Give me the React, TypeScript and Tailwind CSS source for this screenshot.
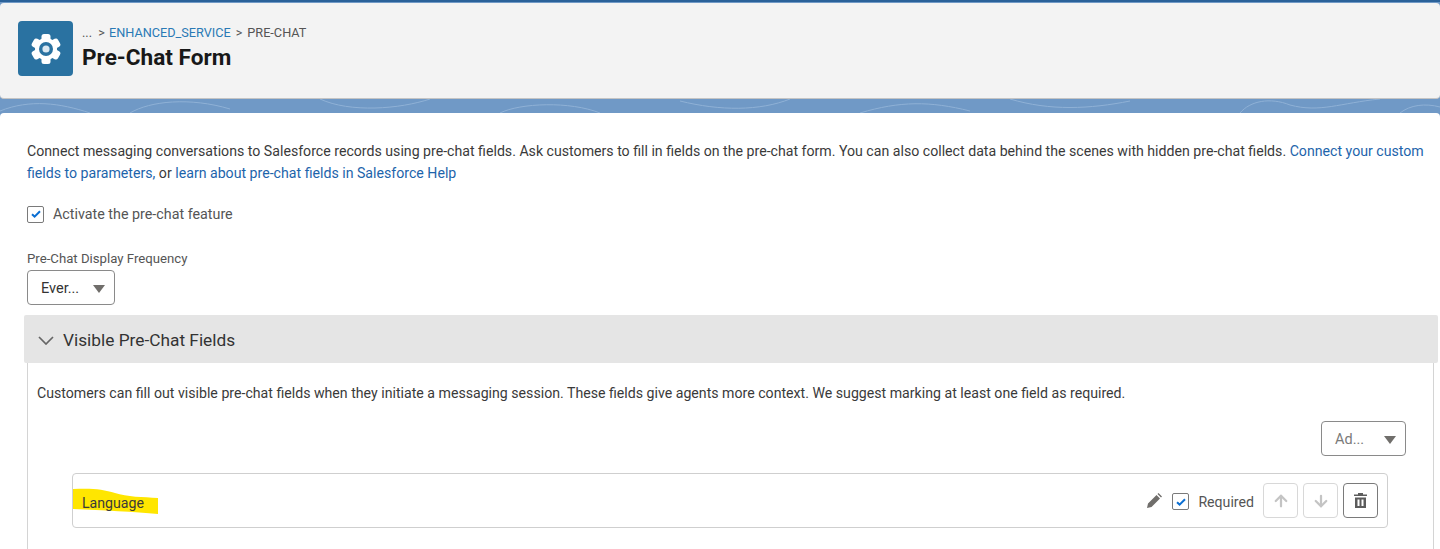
import { ArrowDown, ArrowUp } from "lucide-react";

function Dropdown({ label, muted }: { label: string; muted?: boolean }) {
  return (
    <div
      className={`flex h-[35px] items-center justify-between rounded-[4px] border border-[#8a8a8a] bg-white pl-[13px] pr-[9px] text-[14.5px] ${
        muted ? "w-[85px] text-[#7a7a7a]" : "w-[88px] text-[#333]"
      }`}
    >
      <span className="mt-[2px]">{label}</span>
      <svg className="mt-[2px]" width="12" height="8" viewBox="0 0 12 8">
        <path d="M0 0h12L6 8z" fill="#706e6b" />
      </svg>
    </div>
  );
}

function CheckBox() {
  return (
    <span className="flex h-[17px] w-[17px] items-center justify-center rounded-[2px] border border-[#7a7a7a] bg-white">
      <svg width="10" height="8" viewBox="0 0 10 8">
        <path d="M1 4.2 3.6 6.6 9 1.2" fill="none" stroke="#0b6fd3" strokeWidth="2" />
      </svg>
    </span>
  );
}

function IconButton({ children, disabled }: { children: React.ReactNode; disabled?: boolean }) {
  return (
    <div
      className={`flex h-[35px] w-[35px] items-center justify-center rounded-[4px] border ${
        disabled ? "border-[#d8d8d8] text-[#c4c4c4]" : "border-[#7a7a7a] text-[#5c5c5c]"
      }`}
    >
      {children}
    </div>
  );
}

// solid cog, blue ring, white middle
function Gear() {
  const teeth = [0, 60, 120, 180, 240, 300];
  return (
    <svg width="32" height="32" viewBox="0 0 32 32">
      {teeth.map((a) => (
        <rect key={a} x="11.5" y="1" width="9" height="8" rx="2.5" fill="#fff" transform={`rotate(${a} 16 16)`} />
      ))}
      <circle cx="16" cy="16" r="11" fill="#fff" />
      <circle cx="16" cy="16" r="7" fill="#2a72a1" />
      <circle cx="16" cy="16" r="3.6" fill="#dbe8f1" />
    </svg>
  );
}

function Band() {
  return (
    <svg className="block h-[14px] w-[1440px]" viewBox="0 0 1440 14" fill="none" stroke="#8fb1d6" strokeWidth="1">
      <path d="M0 12C30 0 60 4 90 14M130 14C150 2 190 -2 230 10M320 0C350 14 400 10 430 0M500 14C520 4 570 2 600 14M680 2C720 12 760 12 790 0M860 14C900 2 930 2 970 12M1010 0C1050 12 1090 10 1130 2M1240 14C1250 2 1270 -2 1290 6C1320 14 1340 4 1380 0M1400 14C1410 6 1425 4 1440 8" />
    </svg>
  );
}

export default function App() {
  return (
    <div className="h-[549px] w-[1440px] overflow-hidden bg-[#7099c6] font-['Roboto','Noto_Sans',sans-serif] text-[#3a3a3a]">
      <div className="h-[2px] bg-[#2a6199]" />
      <header className="mt-[1px] flex h-[96px] items-start rounded-[4px] border-b border-[#c4c4c4] bg-[#f3f3f3] pl-[18px] pt-[18px]">
        <div className="flex h-[55px] w-[55px] items-center justify-center rounded-[4px] bg-[#2a72a1]">
          <Gear />
        </div>
        <div className="ml-[9px] pt-[2px]">
          <div className="flex h-[20px] items-center gap-[4px] text-[12.7px] text-[#555]">
            <span className="whitespace-pre">...  &gt;</span>
            <span className="text-[#2a7ab5]">ENHANCED_SERVICE</span>
            <span className="ml-[1px]">&gt;</span>
            <span className="ml-[1px]">PRE-CHAT</span>
          </div>
          <h1 className="text-[22.6px] font-bold leading-[30px] text-[#181818]">Pre-Chat Form</h1>
        </div>
      </header>
      <Band />
      <main className="h-[436px] rounded-t-[4px] bg-white pl-[27px] pr-[2px]">
        <p className="pt-[27px] text-[14.15px] leading-[22px] text-[#3a3a3a]">
          Connect messaging conversations to Salesforce records using pre-chat fields. Ask customers to fill in fields on
          the pre-chat form. You can also collect data behind the scenes with hidden pre-chat fields.{" "}
          <span className="text-[#1d64ab]">Connect your custom fields to parameters,</span> or{" "}
          <span className="text-[#1d64ab]">learn about pre-chat fields in Salesforce Help</span>
        </p>
        <label className="mt-[20px] flex h-[20px] items-center gap-[9px] text-[14.3px] text-[#555]">
          <CheckBox />
          <span className="mt-[1px]">Activate the pre-chat feature</span>
        </label>
        <div className="mt-[26px] text-[13.2px] leading-[18px] text-[#555]">Pre-Chat Display Frequency</div>
        <div className="mt-[2px]">
          <Dropdown label="Ever..." />
        </div>
        <section className="-ml-[3px] mt-[10px]">
          <div className="flex h-[48px] items-center gap-[9px] rounded-[2px] bg-[#e5e5e5] pl-[14px] text-[#333]">
            <svg className="mt-[2px]" width="16" height="9" viewBox="0 0 16 9">
              <path d="M1 1 8 8 15 1" fill="none" stroke="#666" strokeWidth="1.7" />
            </svg>
            <h2 className="mt-[3px] text-[17.3px]">Visible Pre-Chat Fields</h2>
          </div>
          <div className="ml-[3px] mr-[4px] h-[200px] border-x border-[#d4d4d4] pl-[9px] pr-[27px]">
            <p className="pt-[19px] text-[14.15px] leading-[22px] text-[#3a3a3a]">
              Customers can fill out visible pre-chat fields when they initiate a messaging session. These fields give
              agents more context. We suggest marking at least one field as required.
            </p>
            <div className="mt-[17px] flex justify-end">
              <Dropdown label="Ad..." muted />
            </div>
            <div className="relative ml-[35px] mr-[18px] mt-[17px] flex h-[55px] items-center justify-between rounded-[4px] border border-[#cfcfcf] pl-[9px] pr-[9px] text-[14.15px]">
              <svg className="absolute left-0 top-[14px]" width="86" height="26" viewBox="0 0 86 26">
                <path d="M0 1C18 0 30 1 42 5C54 9 70 9 85 10V26C62 24 30 22 0 21Z" fill="#ffe600" />
              </svg>
              <span className="relative mt-[6px] text-[#3a3a3a]">Language</span>
              <div className="flex items-center">
                <svg width="15" height="15" viewBox="0 0 15 15">
                  <path d="M0 15 1 10.5 9.5 2 13 5.5 4.5 14ZM10.5 1 11.5 0 15 3.5 14 4.5Z" fill="#706e6b" />
                </svg>
                <span className="ml-[10px] mt-[2px]">
                  <CheckBox />
                </span>
                <span className="ml-[9px] mt-[5px] text-[#555]">Required</span>
                <span className="ml-[9px] flex gap-[5px]">
                  <IconButton disabled>
                    <ArrowUp className="h-[18px] w-[18px]" strokeWidth={3} />
                  </IconButton>
                  <IconButton disabled>
                    <ArrowDown className="h-[18px] w-[18px]" strokeWidth={3} />
                  </IconButton>
                  <IconButton>
                    <svg width="13" height="15" viewBox="0 0 13 15" fill="currentColor">
                      <path d="M4 0h5v1.5h4V3H0V1.5h4ZM1 4.5h11V15H1ZM3.5 6.5v6.5h2V6.5ZM7.5 6.5v6.5h2V6.5Z" fillRule="evenodd" />
                    </svg>
                  </IconButton>
                </span>
              </div>
            </div>
          </div>
        </section>
      </main>
    </div>
  );
}
